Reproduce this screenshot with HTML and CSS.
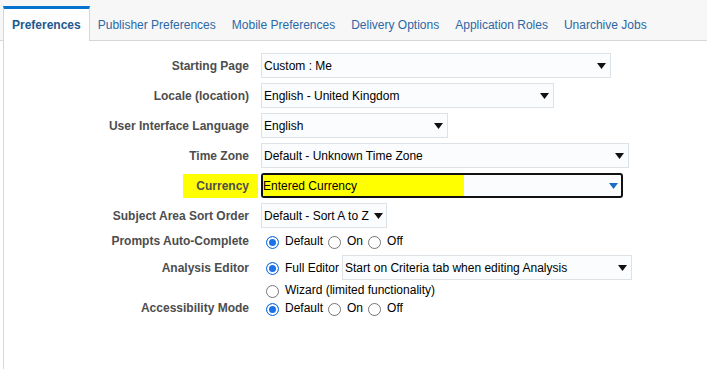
FILE: index.html
```html
<!DOCTYPE html>
<html lang="en">
<head>
  <meta charset="UTF-8" />
  <title>Preferences</title>
  <link rel="stylesheet" href="styles.css">
</head>
<body>
  <div class="tabbar">
    <span class="tab active">Preferences</span>
    <span class="tab">Publisher Preferences</span>
    <span class="tab">Mobile Preferences</span>
    <span class="tab">Delivery Options</span>
    <span class="tab">Application Roles</span>
    <span class="tab">Unarchive Jobs</span>
  </div>
  <div class="panel">
    <div class="row">
      <span class="label">Starting Page</span>
      <div class="select w-start"><span>Custom : Me</span><svg class="arrow" width="9" height="6" viewBox="0 0 9 6"><path d="M0 0H9L4.5 6Z"/></svg></div>
    </div>
    <div class="row">
      <span class="label">Locale (location)</span>
      <div class="select w-locale"><span>English - United Kingdom</span><svg class="arrow" width="9" height="6" viewBox="0 0 9 6"><path d="M0 0H9L4.5 6Z"/></svg></div>
    </div>
    <div class="row">
      <span class="label">User Interface Language</span>
      <div class="select w-lang"><span>English</span><svg class="arrow" width="9" height="6" viewBox="0 0 9 6"><path d="M0 0H9L4.5 6Z"/></svg></div>
    </div>
    <div class="row">
      <span class="label">Time Zone</span>
      <div class="select w-tz"><span>Default - Unknown Time Zone</span><svg class="arrow" width="9" height="6" viewBox="0 0 9 6"><path d="M0 0H9L4.5 6Z"/></svg></div>
    </div>
    <div class="row">
      <span class="label"><span class="mark">Currency</span></span>
      <div class="select w-cur focused"><span class="mark-box">Entered Currency</span><svg class="arrow blue" width="9" height="6" viewBox="0 0 9 6"><path d="M0 0H9L4.5 6Z"/></svg></div>
    </div>
    <div class="row">
      <span class="label">Subject Area Sort Order</span>
      <div class="select w-sort"><span>Default - Sort A to Z</span><svg class="arrow" width="9" height="6" viewBox="0 0 9 6"><path d="M0 0H9L4.5 6Z"/></svg></div>
    </div>
    <div class="row opts r-prompts">
      <span class="label">Prompts Auto-Complete</span>
      <span class="opt"><span class="radio on"></span>Default</span>
      <span class="opt"><span class="radio"></span>On</span>
      <span class="opt"><span class="radio"></span>Off</span>
    </div>
    <div class="row r-editor">
      <span class="label">Analysis Editor</span>
      <span class="opt"><span class="radio on"></span>Full Editor</span>
      <div class="select w-editor"><span>Start on Criteria tab when editing Analysis</span><svg class="arrow" width="9" height="6" viewBox="0 0 9 6"><path d="M0 0H9L4.5 6Z"/></svg></div>
    </div>
    <div class="row opts r-wizard">
      <span class="label"></span>
      <span class="opt"><span class="radio"></span>Wizard (limited functionality)</span>
    </div>
    <div class="row opts r-access">
      <span class="label">Accessibility Mode</span>
      <span class="opt"><span class="radio on"></span>Default</span>
      <span class="opt"><span class="radio"></span>On</span>
      <span class="opt"><span class="radio"></span>Off</span>
    </div>
  </div>
</body>
</html>
```

FILE: styles.css
```css
* { box-sizing: border-box; }
body {
  margin: 0;
  height: 100vh;
  display: flex;
  flex-direction: column;
  font-family: "Liberation Sans", Arial, sans-serif;
  font-size: 12px;
  color: #000;
  background: #fff;
}

/* Tabs */
.tabbar {
  display: flex;
  height: 41px;
  padding: 6px 0 0 3px;
  background: #f7f7f7;
  border-bottom: 1px solid #d6d6d6;
}
.tab {
  display: flex;
  align-items: center;
  padding: 3px 8px 0;
  color: #2b68a6;
  font-size: 12px;
}
.tab.active {
  height: 35px;
  margin-bottom: -1px;
  padding: 0 8px;
  background: #fff;
  border-top: 3px solid #0572ce;
  border-left: 1px solid #d6d6d6;
  border-right: 1px solid #d6d6d6;
  color: #1d5890;
  font-weight: bold;
}

/* Form panel */
.panel {
  flex: 1;
  margin-left: 3px;
  padding-top: 12px;
  border-left: 1px solid #d6d6d6;
}
.row {
  display: flex;
  align-items: center;
  margin-bottom: 5px;
}
.label {
  flex: none;
  width: 245px;
  margin-right: 12px;
  text-align: right;
  font-weight: bold;
  color: #4d4d4d;
}
.mark {
  background: #ffff00;
  padding: 5px 9px 5px 13px;
  margin-right: -9px;
}

.select {
  display: flex;
  align-items: center;
  justify-content: space-between;
  height: 25px;
  padding: 0 4px 0 2px;
  border: 1px solid #dde2e7;
  background: #fafcfe;
}
.arrow { flex: none; fill: #111; }
.arrow.blue { fill: #1a6fc4; }
.w-start { width: 350px; }
.w-locale { width: 293px; }
.w-lang { width: 187px; }
.w-tz { width: 368px; }
.w-cur { width: 362px; }
.w-sort { padding-right: 3px; }
.w-sort .arrow { margin-left: 5px; }
.w-editor { width: 290px; margin-left: 3px; }

.select.focused {
  padding: 0 3px 0 0;
  border: 2px solid #111;
  border-radius: 3px;
}
.mark-box {
  display: flex;
  align-items: center;
  width: 201px;
  height: 100%;
  background: #ffff00;
}

/* Radio options */
.opts { height: 16px; }
.r-prompts { margin-top: 3px; margin-bottom: 6px; }
.r-editor { margin-bottom: 2px; }
.r-wizard { margin-bottom: 2px; }
.opt {
  display: flex;
  align-items: center;
}
.radio {
  flex: none;
  width: 13px;
  height: 13px;
  margin: 3px 6px 0 5px;
  border: 1px solid #767676;
  border-radius: 50%;
  background: #fff;
}
.radio.on {
  margin-top: 2px;
  border-color: #1b72e8;
  background: #1b72e8;
  box-shadow: inset 0 0 0 2px #fff;
}
```
